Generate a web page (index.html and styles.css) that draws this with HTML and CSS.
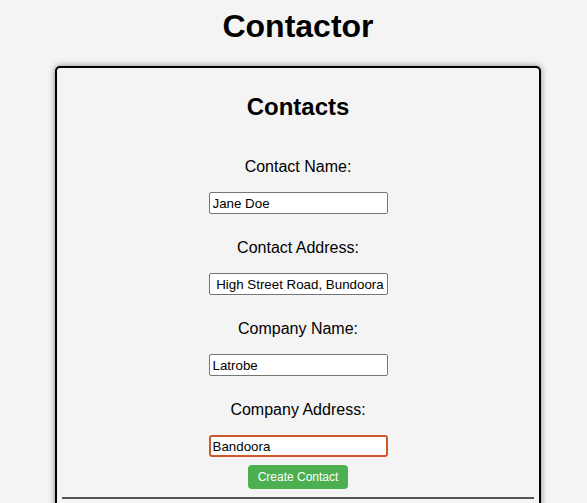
FILE: index.html
```html
<!DOCTYPE html>
<html>
<head>
<meta charset="utf-8">
<link rel="stylesheet" href="styles.css">
</head>
<body>
<h1 class="title">Contactor</h1>
<div class="card">
  <h2 class="card-title">Contacts</h2>
  <form class="form">
    <label class="label">Contact Name:</label>
    <input class="field" type="text" value="Jane Doe">
    <label class="label">Contact Address:</label>
    <input class="field" type="text" value=" High Street Road, Bundoora">
    <label class="label">Company Name:</label>
    <input class="field" type="text" value="Latrobe">
    <label class="label">Company Address:</label>
    <input class="field focused" type="text" value="Bandoora">
    <button class="btn" type="button">Create Contact</button>
  </form>
  <hr class="divider">
</div>
</body>
</html>
```
FILE: styles.css
```css
html, body {
  margin: 0;
  padding: 0;
}
body {
  background: #f4f4f4;
  font-family: "Liberation Sans", Arial, sans-serif;
  color: #000;
  padding: 8px 0 0 9px;
}
.title {
  margin: 0 0 21px;
  font-size: 32px;
  line-height: 37px;
  text-align: center;
  font-weight: bold;
}
.card {
  width: 486px;
  box-sizing: border-box;
  margin: 0 auto;
  border: 2px solid #000;
  border-radius: 5px;
  box-shadow: 0 0 6px rgba(0,0,0,0.45);
  background: #f4f4f4;
  padding: 25px 5px 40px;
}
.card-title {
  margin: 0;
  font-size: 24px;
  line-height: 28px;
  text-align: center;
  font-weight: bold;
}
.form {
  display: flex;
  flex-direction: column;
  align-items: center;
  margin-top: 36px;
}
.label {
  font-size: 16px;
  line-height: 18px;
  padding-top: 1px;
  margin-bottom: 16px;
}
.field {
  width: 179px;
  height: 22px;
  box-sizing: border-box;
  border: 1px solid #767676;
  border-radius: 2px;
  background: #fff;
  font-family: "Liberation Sans", Arial, sans-serif;
  font-size: 13.33px;
  padding: 1px 3px;
  margin: 0 0 24px;
  color: #000;
  outline: none;
}
.field.focused {
  border: 2px solid #d0592b;
  border-radius: 3px;
  padding: 0 2px;
  margin-bottom: 8px;
}
.btn {
  background: #4caf50;
  color: #fff;
  border: none;
  border-radius: 4px;
  font-family: "Liberation Sans", Arial, sans-serif;
  font-size: 12px;
  width: 100px;
  height: 24px;
  padding: 0;
}
.divider {
  margin: 8px 0 0;
  border: none;
  border-top: 2px solid #555;
  height: 0;
}
```
